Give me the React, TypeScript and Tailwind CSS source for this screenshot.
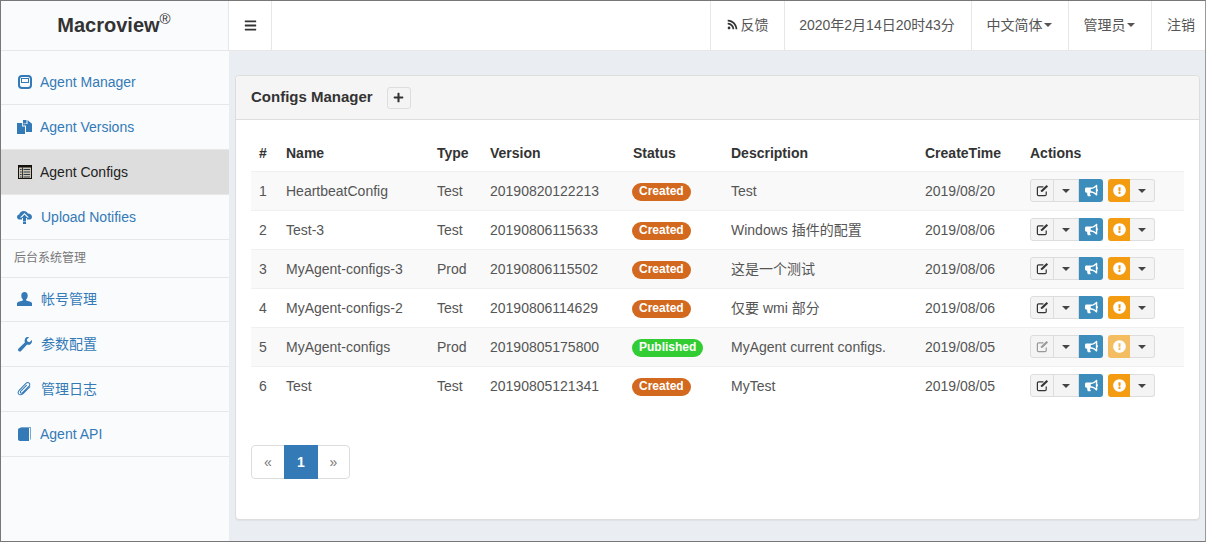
import React from "react";
import { FaBars, FaBullhorn, FaExclamationCircle, FaPlus, FaRss } from "react-icons/fa";

const font = "font-['Liberation_Sans','Noto_Sans_CJK_SC',sans-serif]";

const Caret = () => <span className="inline-block w-0 h-0 border-x-[4px] border-x-transparent border-t-[4px] border-t-current" />;

const ManagerIcon = () => (
  <svg viewBox="0 0 14 14" className="w-[14px] h-[14px]" fill="none" stroke="currentColor">
    <rect x="1" y="1" width="12" height="12" rx="3" strokeWidth="2" />
    <rect x="3.5" y="3.5" width="7" height="4" strokeWidth="1" />
  </svg>
);

const VersionsIcon = () => (
  <svg viewBox="0 0 15 14" className="w-[15px] h-[14px]" fill="currentColor">
    <path d="M0 3h5v3.5h3V14H0z" />
    <path d="M5.8 3 8 5.6H5.8z" />
    <path d="M6 0h3.5v3.5H6zM10.5 0 15 3.8V12H9V6L6.5 4H10.5z" />
  </svg>
);

const ListIcon = () => (
  <svg viewBox="0 0 14 14" className="w-[14px] h-[14px]">
    <rect x="0.5" y="0.5" width="13" height="13" fill="#c9c4b4" stroke="#14100c" />
    <rect x="1" y="1" width="12" height="1.5" fill="#14100c" />
    <path d="M4.5 2.5v10.5" stroke="#14100c" strokeWidth="0.8" />
    <path d="M2 4.5h1.6M2 7h1.6M2 9.5h1.6M2 12h1.6M5.5 4.5h6.5M5.5 7h6.5M5.5 9.5h6.5M5.5 12h6.5" stroke="#2d3b48" strokeWidth="1" />
  </svg>
);

const CloudIcon = () => (
  <svg viewBox="0 0 15 14" className="w-[15px] h-[14px]" fill="currentColor">
    <path d="M3.2 9.6C1.4 9.6 0 8.5 0 6.9 0 5.6 1 4.6 2.2 4.4 2.7 2.4 4.5 1 6.7 1c1.9 0 3.5 1 4.2 2.6C13.2 3.6 15 5 15 6.9c0 1.6-1.3 2.7-3 2.7H10V7.4h2L7.5 3 3 7.4h2v2.2z" />
    <path d="M7.5 4.6 10.6 8H9v3H6V8H4.4zM6 11.5h3V14H6z" />
  </svg>
);

const UserIcon = () => (
  <svg viewBox="0 0 15 14" className="w-[15px] h-[14px]" fill="currentColor">
    <path d="M7.5 0c2 0 3.2 1.4 3.2 3.4 0 1.7-.7 3.3-1.6 4v1.2c2.3.5 4.9 1.2 5.9 2.4v3H0v-3c1-1.2 3.6-1.9 5.9-2.4V7.4c-.9-.7-1.6-2.3-1.6-4C4.3 1.4 5.5 0 7.5 0z" />
  </svg>
);

const WrenchIcon = () => (
  <svg viewBox="0 0 15 15" className="w-[15px] h-[15px]" fill="currentColor">
    <path d="M10.8 0c.5 0 .9.1 1.3.2L9.8 2.5l.6 2.1 2.1.6 2.3-2.3c.2.4.2.8.2 1.3 0 2.3-2 4-4.3 3.6-.2 0-.4-.1-.6-.2l-6 6.3c-.7.8-1.8.8-2.5.1-.7-.7-.7-1.8 0-2.5l6.3-6c-.1-.2-.2-.4-.2-.6C7.3 2 8.6 0 10.8 0z" />
  </svg>
);

const ClipIcon = () => (
  <svg viewBox="0 0 16 16" className="w-[16px] h-[16px]" fill="none" stroke="currentColor" strokeWidth="1.1" strokeLinecap="round" strokeLinejoin="round">
    <path d="M13.8 5.6 6.5 13c-1.4 1.4-3.6 1.6-4.6.6s-.9-3 .6-4.5l6.8-6.9c1.1-1.1 2.7-1.4 3.7-.5s.7 2.5-.4 3.6L6 11.9c-.7.7-1.6.8-2.1.3s-.4-1.4.3-2.1l5.9-6" />
  </svg>
);

const BookIcon = () => (
  <svg viewBox="0 0 13 14" className="w-[13px] h-[14px]">
    <path d="M2.5 0H13v12.5h-1V1H2.5z" fill="currentColor" opacity="0.65" />
    <path d="M2 1h9v13H2C.8 14 0 13.3 0 12V3c0-1.2.8-2 2-2z" fill="currentColor" />
  </svg>
);

const EditIcon = () => (
  <svg viewBox="0 0 14 14" className="w-[13px] h-[13px]" fill="none" stroke="currentColor">
    <path d="M8 3H2.8C2 3 1.5 3.5 1.5 4.3v6.9c0 .8.5 1.3 1.3 1.3h6.9c.8 0 1.3-.5 1.3-1.3V8" strokeWidth="1.3" />
    <path d="M5.5 6.8 11.4 1l1.6 1.6L7.1 8.4 5.2 8.7z" fill="currentColor" stroke="none" />
  </svg>
);

const navTop = [
  { label: "Agent Manager", icon: <ManagerIcon /> },
  { label: "Agent Versions", icon: <VersionsIcon /> },
  { label: "Agent Configs", icon: <ListIcon />, active: true },
  { label: "Upload Notifies", icon: <CloudIcon />, gap: "ml-[9px]" },
];

const navBottom = [
  { label: "帐号管理", icon: <UserIcon />, gap: "ml-[9px]" },
  { label: "参数配置", icon: <WrenchIcon />, gap: "ml-[9px]" },
  { label: "管理日志", icon: <ClipIcon />, gap: "ml-[9px]" },
  { label: "Agent API", icon: <BookIcon /> },
];

const rows = [
  { id: 1, name: "HeartbeatConfig", type: "Test", version: "20190820122213", status: "Created", desc: "Test", time: "2019/08/20" },
  { id: 2, name: "Test-3", type: "Test", version: "20190806115633", status: "Created", desc: "Windows 插件的配置", time: "2019/08/06" },
  { id: 3, name: "MyAgent-configs-3", type: "Prod", version: "20190806115502", status: "Created", desc: "这是一个测试", time: "2019/08/06" },
  { id: 4, name: "MyAgent-configs-2", type: "Test", version: "20190806114629", status: "Created", desc: "仅要 wmi 部分", time: "2019/08/06" },
  { id: 5, name: "MyAgent-configs", type: "Prod", version: "20190805175800", status: "Published", desc: "MyAgent current configs.", time: "2019/08/05", published: true },
  { id: 6, name: "Test", type: "Test", version: "20190805121341", status: "Created", desc: "MyTest", time: "2019/08/05" },
];

const columns = [
  { label: "#", w: "w-[27px]" },
  { label: "Name", w: "w-[151px]" },
  { label: "Type", w: "w-[53px]" },
  { label: "Version", w: "w-[143px]" },
  { label: "Status", w: "w-[98px]" },
  { label: "Description", w: "w-[194px]" },
  { label: "CreateTime", w: "w-[105px]" },
  { label: "Actions", w: "" },
];

const Actions = ({ off }: { off?: boolean }) => (
  <div className="flex items-center">
    <div className={`w-[24px] h-[23px] flex items-center justify-center bg-[#f4f4f4] border border-[#ddd] rounded-l-[3px] ${off ? "text-[#999]" : "text-[#333]"}`}>
      <EditIcon />
    </div>
    <div className="w-[26px] h-[23px] -ml-px flex items-center justify-center bg-[#f4f4f4] border border-[#ddd] text-[#444]">
      <Caret />
    </div>
    <div className="w-[24px] h-[23px] flex items-center justify-center bg-[#3c8dbc] rounded-r-[3px] text-white">
      <FaBullhorn className="w-[13px] h-[13px]" />
    </div>
    <div className={`ml-[5px] w-[22px] h-[23px] flex items-center justify-center rounded-l-[3px] text-white ${off ? "bg-[#f5bd62]" : "bg-[#f39c12]"}`}>
      <FaExclamationCircle className="w-[13px] h-[13px]" />
    </div>
    <div className="w-[25px] h-[23px] flex items-center justify-center bg-[#f4f4f4] border border-[#ddd] border-l-0 rounded-r-[3px] text-[#444]">
      <Caret />
    </div>
  </div>
);

const NavRow = ({ item }: { item: { label: string; icon: React.ReactNode; active?: boolean; gap?: string } }) => (
  <div
    className={`h-[45px] flex items-center pl-[16px] border-b border-[#e7e7e7] ${
      item.active ? "bg-[#dddddd] text-[#222]" : "text-[#337ab7]"
    }`}
  >
    <span className="w-[15px] flex justify-center">{item.icon}</span>
    <span className={item.gap ?? "ml-[8px]"}>{item.label}</span>
  </div>
);

export default function App() {
  return (
    <div className={`${font} w-[1206px] h-[542px] overflow-hidden flex flex-col bg-[#eaedf2] border border-[#777] border-r-[#999] text-[14px] leading-[20px] text-[#555]`}>
      {/* top bar */}
      <header className="h-[50px] shrink-0 flex bg-white border-b border-[#e7e7e7]">
        <div className="w-[228px] flex items-center justify-center bg-[#fafbfd] border-r border-[#e7e7e7] text-[#333] text-[20px] font-bold">
          <span className="-mt-[2px] -ml-[1px]">Macroview<sup className="text-[15px] font-normal -top-[8px] relative align-baseline">®</sup></span>
        </div>
        <div className="w-[43px] flex items-center justify-center border-r border-[#e7e7e7] text-[#333]">
          <FaBars className="w-[13px] h-[13px]" />
        </div>
        <div className="ml-auto flex">
          <div className="w-[74px] pb-[2px] flex items-center justify-center gap-[3px] border-l border-[#e7e7e7]">
            <FaRss className="w-[11px] h-[11px] text-[#333]" />
            <span>反馈</span>
          </div>
          <div className="w-[187px] pb-[2px] pr-[2px] flex items-center justify-center border-l border-[#e7e7e7]">2020年2月14日20时43分</div>
          <div className="w-[97px] pb-[2px] pr-[2px] flex items-center justify-center gap-[1px] border-l border-[#e7e7e7]">
            中文简体<Caret />
          </div>
          <div className="w-[83px] pb-[2px] pr-[2px] flex items-center justify-center gap-[1px] border-l border-[#e7e7e7]">
            管理员<Caret />
          </div>
          <div className="w-[54px] pb-[2px] flex items-center pl-[15px] border-l border-[#e7e7e7]">注销</div>
        </div>
      </header>

      <div className="flex flex-1 min-h-0">
        {/* sidebar */}
        <aside className="w-[228px] shrink-0 bg-[#fafbfd] pt-[9px]">
          {navTop.map((item) => (
            <NavRow key={item.label} item={item} />
          ))}
          <div className="h-[38px] -mb-px flex items-center pl-[13px] pb-[2px] border-b border-[#e7e7e7] text-[12px] text-[#777]">后台系统管理</div>
          {navBottom.map((item) => (
            <NavRow key={item.label} item={item} />
          ))}
        </aside>

        {/* content */}
        <main className="flex-1 pl-[6px] pr-[5px] pt-[24px]">
          <section className="h-[445px] bg-white border border-[#ddd] rounded-[4px] shadow-[0_1px_1px_rgba(0,0,0,0.05)]">
            <div className="h-[44px] flex items-center pl-[15px] bg-[#f5f5f5] border-b border-[#ddd] rounded-t-[4px]">
              <h3 className="text-[15px] font-bold text-[#333] -mt-[1px]">Configs Manager</h3>
              <button className="ml-[14px] w-[24px] h-[22px] flex items-center justify-center bg-[#f4f4f4] border border-[#ddd] rounded-[3px] text-[#333]">
                <FaPlus className="w-[11px] h-[11px]" />
              </button>
            </div>
            <div className="px-[15px] pt-[15px]">
              <table className="w-full border-collapse table-fixed">
                <thead>
                  <tr className="h-[36px]">
                    {columns.map((c) => (
                      <th key={c.label} className={`${c.w} px-[8px] text-left font-bold text-[#333]`}>
                        {c.label}
                      </th>
                    ))}
                  </tr>
                </thead>
                <tbody>
                  {rows.map((r) => (
                    <tr key={r.id} className={`h-[39px] border-t border-[#f0f0f0] ${r.id % 2 === 1 ? "bg-[#f9f9f9]" : ""}`}>
                      <td className="px-[8px]">{r.id}</td>
                      <td className="px-[8px]">{r.name}</td>
                      <td className="px-[8px]">{r.type}</td>
                      <td className="px-[8px]">{r.version}</td>
                      <td className="px-[8px]">
                        <span className={`inline-block -ml-px px-[7px] h-[18px] leading-[17px] rounded-[9px] text-[12px] font-bold text-white ${r.published ? "bg-[#32cd32]" : "bg-[#d2691e]"}`}>
                          {r.status}
                        </span>
                      </td>
                      <td className="px-[8px]">{r.desc}</td>
                      <td className="px-[8px]">{r.time}</td>
                      <td className="px-[8px]">
                        <Actions off={r.published} />
                      </td>
                    </tr>
                  ))}
                </tbody>
              </table>

              <div className="mt-[40px] flex w-fit h-[34px] border border-[#ddd] rounded-[4px] bg-white">
                <div className="w-[32px] flex items-center justify-center text-[#777]">«</div>
                <div className="w-[34px] -my-px flex items-center justify-center bg-[#337ab7] text-white font-bold">1</div>
                <div className="w-[31px] flex items-center justify-center text-[#777]">»</div>
              </div>
            </div>
          </section>
        </main>
      </div>
    </div>
  );
}
